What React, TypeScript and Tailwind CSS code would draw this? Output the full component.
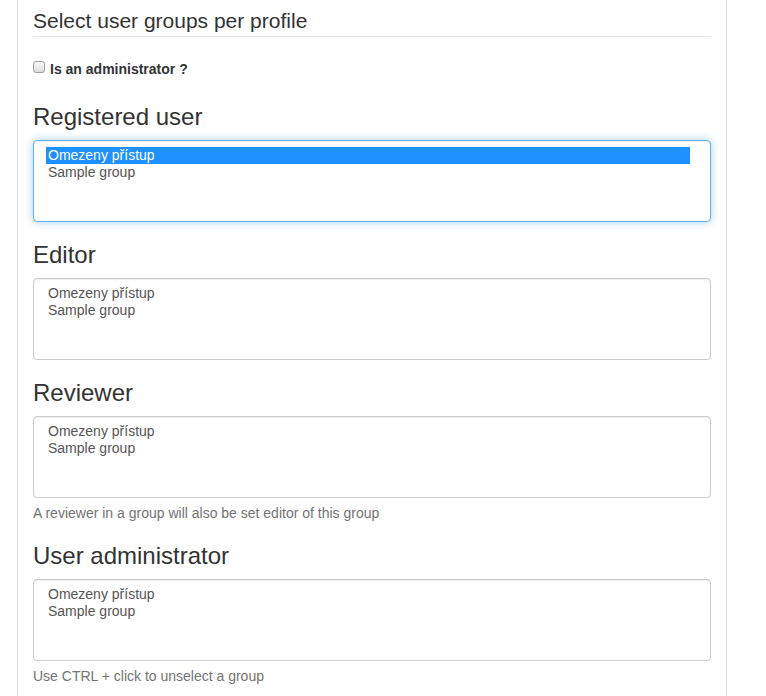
import React from 'react';

const groups = ['Omezeny přístup', 'Sample group'];

const GroupBox: React.FC<{ focused?: boolean; selected?: number }> = ({ focused, selected }) => (
  <div
    className={
      'h-[82px] rounded-[4px] border bg-white px-[12px] py-[6px] ' +
      (focused
        ? 'border-[#66afe9] shadow-[inset_0_1px_1px_rgba(0,0,0,0.075),0_0_8px_rgba(102,175,233,0.6)]'
        : 'border-[#ccc] shadow-[inset_0_1px_1px_rgba(0,0,0,0.075)]')
    }
  >
    <div className="mr-[8px]">
      {groups.map((g, i) => (
        <div
          key={g}
          className={
            'h-[17px] px-[2px] text-[14px] leading-[17px] ' +
            (selected === i ? 'bg-[#1e90ff] text-white' : 'text-[#555]')
          }
        >
          {g}
        </div>
      ))}
    </div>
  </div>
);

const Heading: React.FC<{ children: React.ReactNode; top: string }> = ({ children, top }) => (
  <h3 className={`${top} mb-[10px] text-[24px] leading-[26px] font-normal text-[#333]`}>{children}</h3>
);

export default function App() {
  return (
    <div className="min-h-[696px] bg-white font-['Liberation_Sans',Arial,sans-serif]">
      <div className="ml-[17px] w-[710px] min-h-[696px] border-x border-[#ddd] px-[15px] pt-[6px]">
        <div className="border-b border-[#e5e5e5] text-[21px] leading-[30px] text-[#333]">
          Select user groups per profile
        </div>

        <label className="mt-[22px] flex h-[20px] items-start">
          <span className="mt-[2px] h-[12px] w-[12px] rounded-[3px] border border-[#a0a0a0] bg-gradient-to-b from-[#fbfbfb] to-[#dcdcdc]" />
          <span className="ml-[5px] text-[14px] leading-[20px] font-bold text-[#333]">Is an administrator ?</span>
        </label>

        <Heading top="mt-[25px]">Registered user</Heading>
        <GroupBox focused selected={0} />

        <Heading top="mt-[20px]">Editor</Heading>
        <GroupBox />

        <Heading top="mt-[20px]">Reviewer</Heading>
        <GroupBox />
        <p className="mt-[5px] text-[14px] leading-[20px] text-[#737373]">
          A reviewer in a group will also be set editor of this group
        </p>

        <Heading top="mt-[20px]">User administrator</Heading>
        <GroupBox />
        <p className="mt-[5px] text-[14px] leading-[20px] text-[#737373]">Use CTRL + click to unselect a group</p>
      </div>
    </div>
  );
}
